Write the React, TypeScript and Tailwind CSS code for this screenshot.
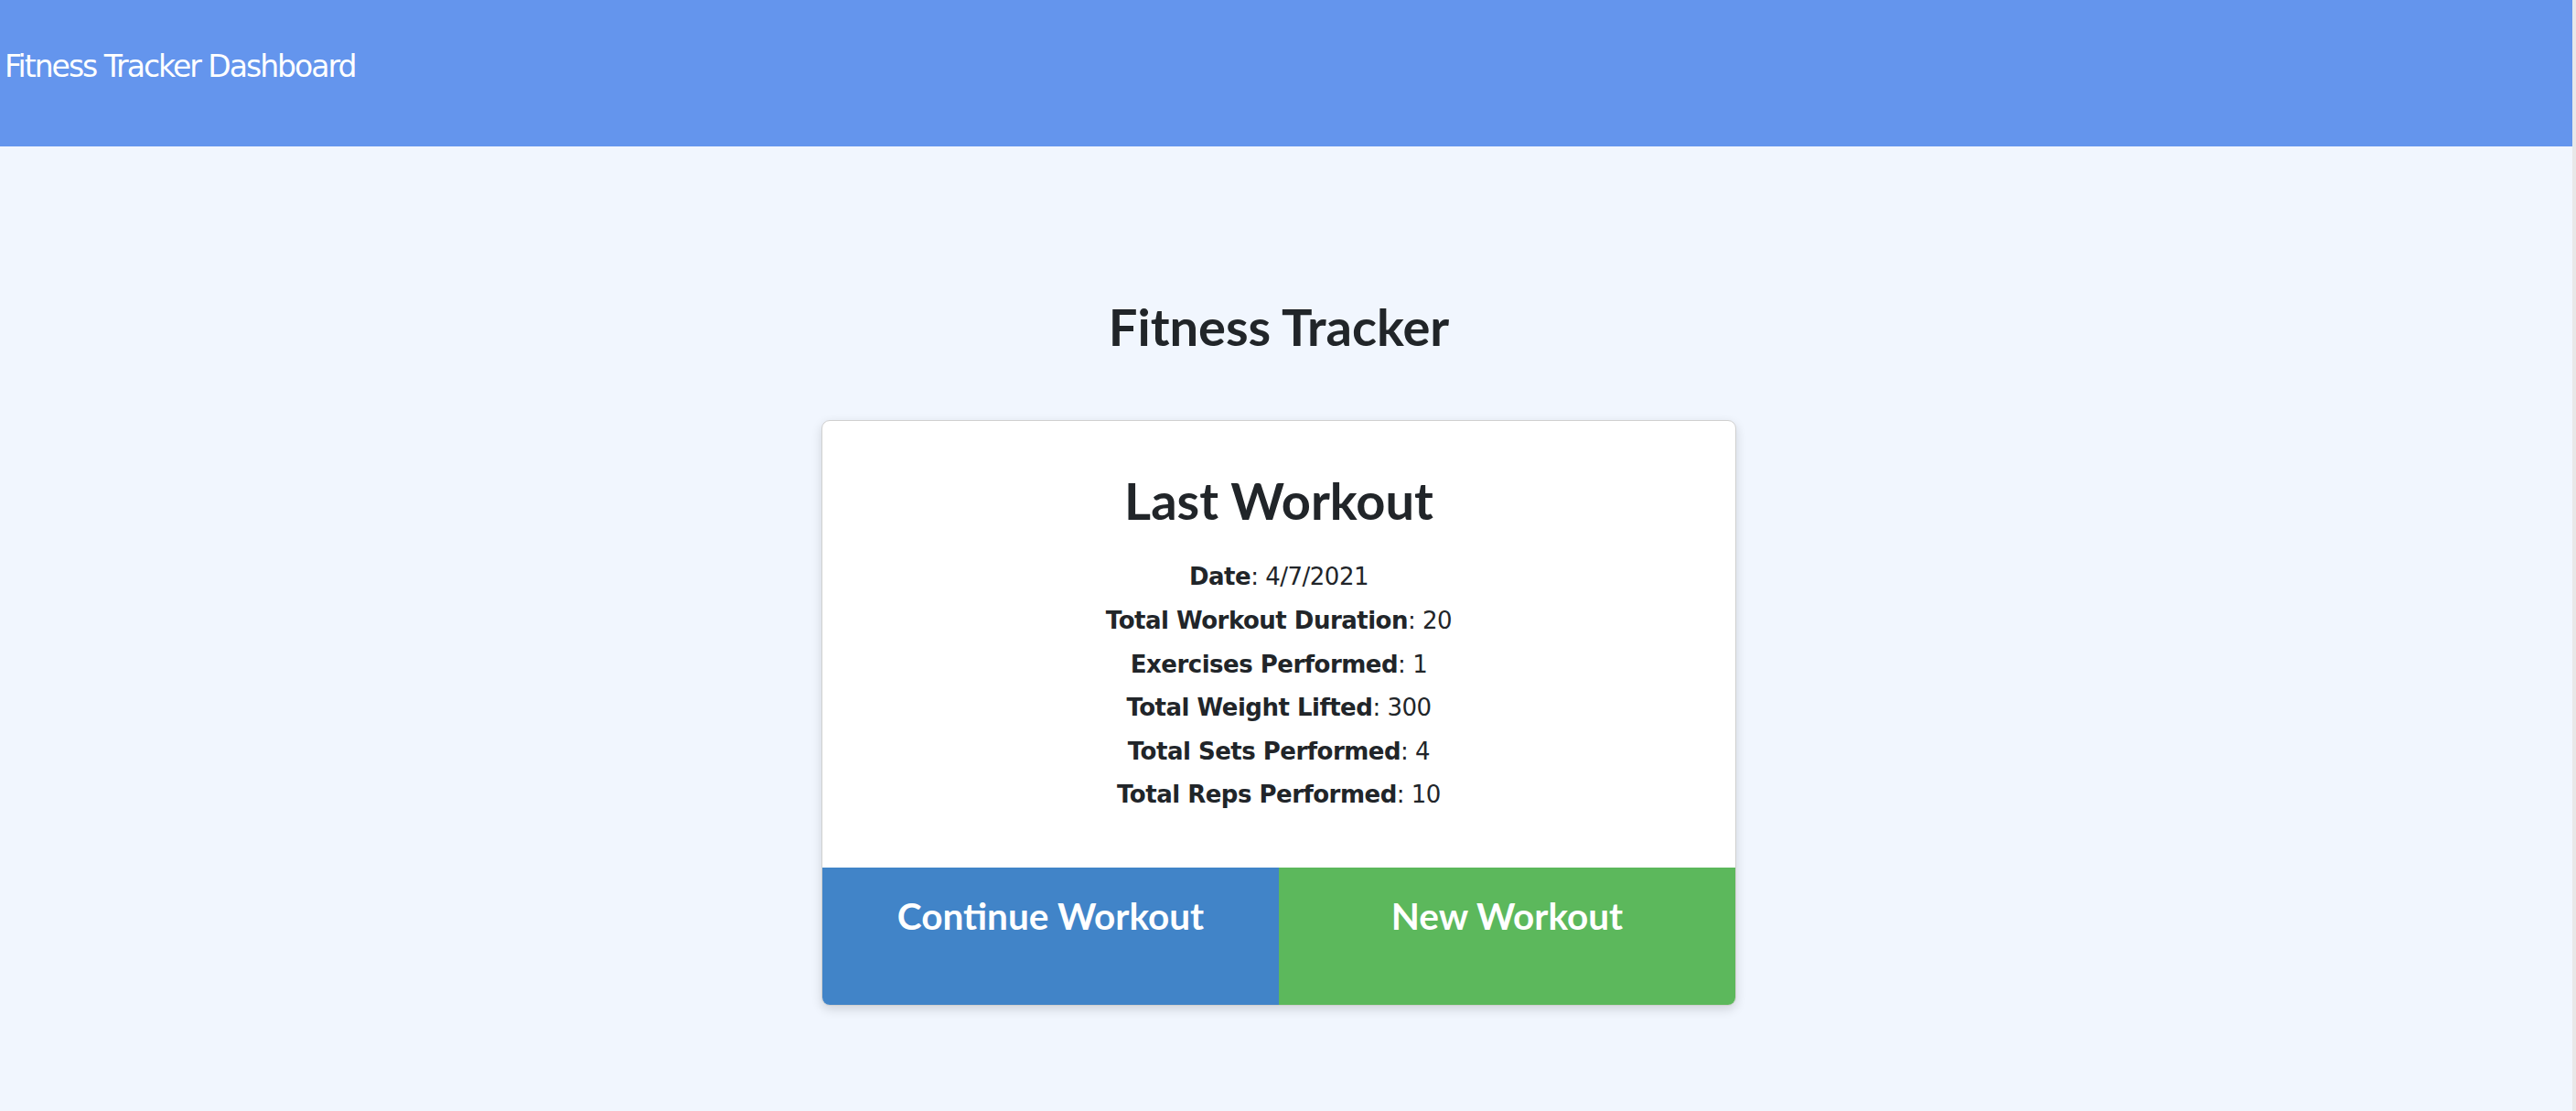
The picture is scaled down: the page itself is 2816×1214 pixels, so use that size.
const stats = [
  { label: "Date", value: "4/7/2021" },
  { label: "Total Workout Duration", value: "20" },
  { label: "Exercises Performed", value: "1" },
  { label: "Total Weight Lifted", value: "300" },
  { label: "Total Sets Performed", value: "4" },
  { label: "Total Reps Performed", value: "10" },
];

export default function App() {
  return (
    <div className="min-h-[1214px] border-r-4 border-[#e8e8e8] bg-[#f1f6fe] text-[#212529]">
      <header className="h-[160px] bg-[#6495ed] pl-[5px] pt-[54px]">
        <span className="font-['DejaVu_Sans',sans-serif] text-[33px] leading-[1.164] tracking-[-2px] text-white">
          Fitness Tracker Dashboard
        </span>
      </header>

      <main className="flex flex-col items-center pr-[16px] pt-[163px] font-['Lato',sans-serif]">
        <h1 className="text-[56px] font-bold leading-[1.2]">Fitness Tracker</h1>

        <div className="mt-[69px] w-[1000px] overflow-hidden rounded-[9px] border border-[#d0d0d0] bg-white shadow-[0_4px_12px_rgba(0,0,0,0.14)]">
          <div className="flex flex-col items-center pt-[53px] pb-[55px]">
            <h2 className="text-[56px] font-bold leading-[1.2]">Last Workout</h2>
            <div className="mt-[27px] flex flex-col items-center font-['DejaVu_Sans',sans-serif] text-[26px] leading-[47.6px] tracking-[-0.5px]">
              {stats.map((s) => (
                <p key={s.label}>
                  <strong className="font-bold">{s.label}</strong>: {s.value}
                </p>
              ))}
            </div>
          </div>
          <div className="grid h-[150px] grid-cols-2 text-[40.5px] font-bold leading-[1.2] text-white">
            <button className="flex items-start justify-center bg-[#4184c8] pt-[29px]">Continue Workout</button>
            <button className="flex items-start justify-center bg-[#5cb85c] pt-[29px]">New Workout</button>
          </div>
        </div>
      </main>
    </div>
  );
}
